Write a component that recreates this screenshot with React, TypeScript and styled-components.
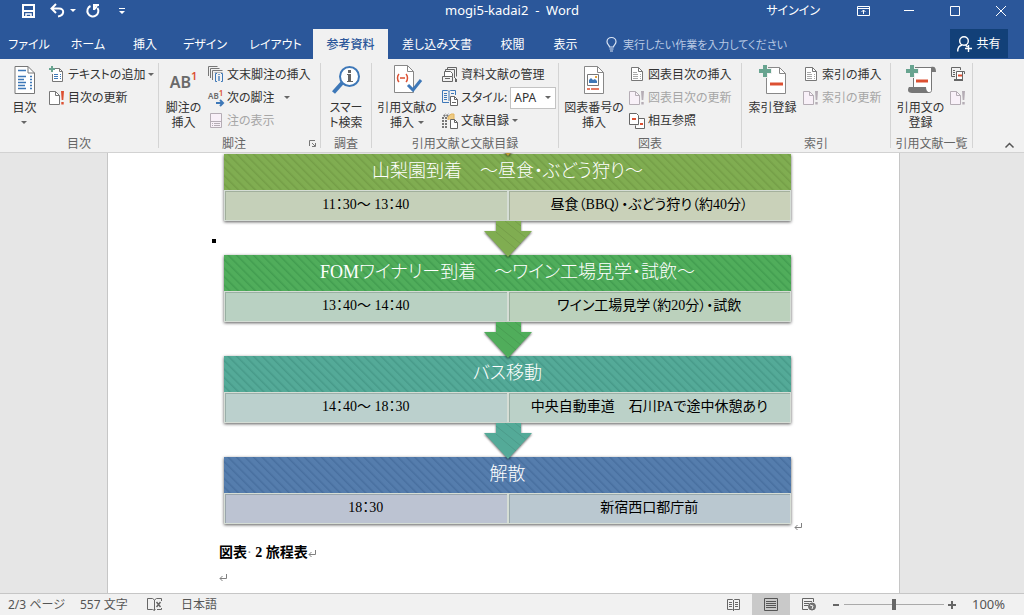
import React from "react";
import styled, { createGlobalStyle } from "styled-components";

const GlobalStyle = createGlobalStyle`
  *, *::before, *::after { box-sizing: border-box; }
  body {
    margin: 0;
    font-family: "Noto Sans", "Noto Sans CJK JP", sans-serif;
    font-size: 12px;
    line-height: 15px;
    font-feature-settings: "palt";
    color: #444;
  }
  button, input, select {
    font: inherit;
    font-feature-settings: inherit;
    color: inherit;
    margin: 0;
  }
  button { border: 0; padding: 0; background: none; white-space: nowrap; }
  svg { display: block; flex: none; overflow: visible; }
`;

const BLUE = "#2b579a";

const Window = styled.div`
  display: flex;
  flex-direction: column;
  height: 100vh;
  background: #e6e6e6;
`;

/* ---------- title bar ---------- */

const TitleBar = styled.header`
  display: grid;
  grid-template-columns: 1fr auto 1fr;
  align-items: center;
  height: 29px;
  padding-bottom: 8px;
  background: ${BLUE};
  color: #fff;
`;

const QuickAccess = styled.div`
  display: flex;
  align-items: center;
  padding-left: 21px;
`;

const QuickButton = styled.button<{ $gap: number }>`
  margin-right: ${(p) => p.$gap}px;
`;

const Title = styled.h1`
  margin: 0;
  font-size: 13px;
  font-weight: 400;
  white-space: pre;
`;

const WindowControls = styled.div`
  display: flex;
  align-items: center;
  justify-content: flex-end;
`;

const SignIn = styled.button`
  margin-right: 20px;
`;

const WindowButton = styled.button`
  display: flex;
  justify-content: center;
  width: 46px;
`;

/* ---------- tab strip ---------- */

const TabStrip = styled.nav`
  display: flex;
  height: 30px;
  background: ${BLUE};
  color: #fff;
`;

const Tab = styled.button<{ $width: number; $active?: boolean }>`
  width: ${(p) => p.$width}px;
  font-weight: ${(p) => (p.$active ? 500 : 400)};
  background: ${(p) => (p.$active ? "#f1f1f1" : "transparent")};
  color: ${(p) => (p.$active ? BLUE : "#fff")};
`;

const TellMe = styled.label`
  display: flex;
  align-items: center;
  flex: 1;
  gap: 6px;
  padding-left: 14px;
`;

const TellMeInput = styled.input`
  flex: 1;
  min-width: 0;
  padding: 0;
  border: 0;
  outline: 0;
  font-size: 11px;
  background: none;
  &::placeholder { color: #b9c9e4; opacity: 1; }
`;

const Share = styled.button`
  display: flex;
  align-items: center;
  justify-content: center;
  gap: 4px;
  width: 58px;
  height: 29px;
  margin-right: 16px;
  background: #124078;
`;

/* ---------- ribbon ---------- */

const Ribbon = styled.div`
  display: flex;
  height: 94px;
  padding-top: 4px;
  background: #f1f1f1;
  border-bottom: 1px solid #d2d2d2;
`;

const Group = styled.section<{ $width: number }>`
  display: flex;
  flex-direction: column;
  flex: none;
  width: ${(p) => p.$width}px;
  padding-right: 1px;
  background: linear-gradient(#d4d4d4, #d4d4d4) right top / 1px 85px no-repeat;
`;

const GroupBody = styled.div`
  display: flex;
  flex: none;
  height: 71px;
`;

const GroupFooter = styled.div`
  display: flex;
  align-items: center;
  flex: 1;
`;

const GroupName = styled.h2`
  flex: 1;
  margin: 0;
  font-size: 12px;
  font-weight: 400;
  text-align: center;
  white-space: nowrap;
  color: #666;
`;

const Launcher = styled.button`
  width: 11px;
`;

const BigButton = styled.button<{ $width: number }>`
  display: flex;
  flex-direction: column;
  align-items: center;
  flex: none;
  gap: 4px;
  width: ${(p) => p.$width}px;
  padding-top: 2px;
`;

const BigLabel = styled.span`
  display: flex;
  flex-direction: column;
  align-items: center;
  color: #333;
`;

const LabelLine = styled.span`
  display: flex;
  align-items: center;
  justify-content: center;
  gap: 4px;
  height: 15px;
`;

const Commands = styled.div`
  display: flex;
  flex-direction: column;
`;

const Command = styled.button<{ $off?: boolean }>`
  display: flex;
  align-items: center;
  gap: 3px;
  height: 23px;
  color: ${(p) => (p.$off ? "#a6a6a6" : "#333")};
`;

const CommandCaret = styled.span<{ $apart?: boolean }>`
  margin-left: ${(p) => (p.$apart ? 6 : 0)}px;
`;

const IconSlot = styled.span`
  display: flex;
  flex: none;
  width: 16px;
`;

const StyleRow = styled.label`
  display: flex;
  align-items: center;
  gap: 3px;
  height: 23px;
  white-space: nowrap;
  color: #333;
`;

const SelectBox = styled.span`
  display: grid;
  grid-template-columns: 1fr 10px;
  align-items: center;
  flex: none;
  width: 46px;
  height: 22px;
  border: 1px solid #c3c3c3;
  background: #fff;
`;

const StyleSelect = styled.select`
  grid-area: 1 / 1 / 2 / 3;
  width: 44px;
  height: 20px;
  padding: 0 12px 0 3px;
  border: 0;
  outline: 0;
  appearance: none;
  background: none;
`;

const SelectArrow = styled.span`
  grid-area: 1 / 2;
  pointer-events: none;
`;

const RibbonEnd = styled.div`
  display: flex;
  flex: 1;
  align-items: flex-end;
  justify-content: flex-end;
  padding: 0 10px 4px 0;
`;

/* ---------- document ---------- */

const Workspace = styled.main`
  flex: 1;
  min-height: 0;
  overflow: hidden;
  display: flex;
  justify-content: center;
  padding-right: 17px;
`;

const Paper = styled.article`
  width: 793px;
  padding: 0 107px 0 111px;
  background: #fff;
  border: solid #c6c6c6;
  border-width: 0 1px;
  font-family: "Liberation Serif", "Noto Sans CJK JP", serif;
  font-weight: 300;
  color: #000;
`;

const Figure = styled.figure`
  position: relative;
  display: flex;
  flex-direction: column;
  align-items: center;
  width: 567px;
  margin: -33px 0 0 5px;
`;

const AnchorMark = styled.span`
  position: absolute;
  left: -12px;
  top: 119px;
  width: 4px;
  height: 4px;
  background: #000;
`;

const EndMark = styled.span`
  position: absolute;
  right: -11px;
  bottom: -6px;
`;

const Step = styled.section`
  width: 100%;
  box-shadow: 0 1px 3px rgba(0, 0, 0, 0.65);
`;

const StepTitle = styled.h3<{ $color: string; $line: string }>`
  height: 36px;
  margin: 0;
  font-size: 18px;
  line-height: 34px;
  font-weight: 300;
  text-align: center;
  white-space: nowrap;
  color: #fff;
  background: repeating-linear-gradient(
    45deg,
    ${(p) => p.$color} 0,
    ${(p) => p.$color} 3px,
    ${(p) => p.$line} 4px,
    ${(p) => p.$color} 6px
  );
`;

const StepCells = styled.div`
  display: grid;
  grid-template-columns: 1fr 1fr;
  height: 31px;
`;

const StepCell = styled.p<{ $color: string }>`
  margin: 0;
  font-size: 14px;
  line-height: 27px;
  font-weight: 400;
  text-align: center;
  white-space: nowrap;
  background: ${(p) => p.$color};
  border: 1px solid #d5ddd5;
  box-shadow: inset 1px 1px 0 rgba(70, 90, 80, 0.28);
`;

const ArrowShape = styled.svg`
  position: relative;
  margin-bottom: -3px;
  filter: drop-shadow(0 1px 1px rgba(0, 0, 0, 0.6));
`;

const Caption = styled.p`
  display: flex;
  align-items: center;
  margin: 17px 0 0;
  font-size: 14px;
  line-height: 24px;
  font-weight: 700;
  white-space: pre;
`;

const SpaceMark = styled.span`
  font-weight: 400;
  color: #808080;
`;

const EmptyLine = styled.p`
  display: flex;
  align-items: center;
  height: 24px;
  margin: 0;
`;

/* ---------- status bar ---------- */

const StatusBar = styled.footer`
  display: flex;
  align-items: center;
  height: 22px;
  padding: 0 19px 0 8px;
  background: #f1f1f1;
  border-top: 1px solid #c6c6c6;
  color: #555;
`;

const StatusItem = styled.button<{ $width: number }>`
  width: ${(p) => p.$width}px;
  text-align: left;
`;

const Spacer = styled.div`
  flex: 1;
`;

const ViewButton = styled.button<{ $active?: boolean }>`
  display: flex;
  align-items: center;
  justify-content: center;
  width: 38px;
  height: 21px;
  background: ${(p) => (p.$active ? "#c9c9c9" : "transparent")};
`;

const ZoomButton = styled.button`
  width: 8px;
  margin: 0 4px;
`;

const ZoomSlider = styled.input`
  width: 100px;
  height: 12px;
  appearance: none;
  background: linear-gradient(#aaa, #aaa) center / 100% 1px no-repeat;
  &::-webkit-slider-thumb {
    appearance: none;
    width: 4px;
    height: 11px;
    background: #666;
  }
`;

const ZoomValue = styled.button`
  width: 33px;
  margin-left: 12px;
  font-size: 13px;
  text-align: right;
`;

/* ---------- icons ---------- */

const Caret = ({ color = "#666" }: { color?: string }) => (
  <svg width="6" height="3" viewBox="0 0 6 3"><path d="M0 0h6L3 3z" fill={color} /></svg>
);

const SaveIcon = () => (
  <svg width="15" height="14" viewBox="0 0 15 14" fill="none" stroke="#fff" strokeWidth="2">
    <path d="M2 1h11v12H2zM2 7h11" /><path d="M5 13v-3h5v3" strokeWidth="1.5" />
  </svg>
);
const UndoIcon = () => (
  <svg width="15" height="14" viewBox="0 0 15 14" fill="none" stroke="#fff" strokeWidth="2">
    <path d="M6 0 1.500 4.500 6 9M2 4.500h7c6 0 5.500 7-1 8" />
  </svg>
);
const RedoIcon = () => (
  <svg width="14" height="14" viewBox="0 0 14 14" fill="none" stroke="#fff" strokeWidth="2">
    <path d="M4.500 2A5.500 5.500 0 1 0 11.500 4" /><path d="M8 6V1h5M8 5.500 11 2" />
  </svg>
);
const CustomizeIcon = () => (
  <svg width="6" height="8" viewBox="0 0 6 8" fill="#fff"><path d="M0 1h6v1H0zM0 4h6L3 7z" /></svg>
);
const RibbonOptionsIcon = () => (
  <svg width="13" height="10" viewBox="0 0 13 10" fill="none" stroke="#fff">
    <path d="M.5.5h12v9H.5zM.5 2.500h12M6.500 8V4M4.500 6l2-2 2 2" />
  </svg>
);
const MinimizeIcon = () => <svg width="10" height="10" stroke="#fff"><path d="M0 4.500h10" /></svg>;
const MaximizeIcon = () => <svg width="10" height="10" stroke="#fff" fill="none"><path d="M.5.5h9v9h-9z" /></svg>;
const CloseIcon = () => <svg width="10" height="10" stroke="#fff"><path d="M0 0l10 10M10 0 0 10" /></svg>;

const BulbIcon = () => (
  <svg width="11" height="15" viewBox="0 0 11 15" fill="none" stroke="#dce6f5" strokeWidth="1.200">
    <path d="M3.500 10C3.500 8 1 7.500 1 4.800a4.500 4.300 0 0 1 9 0C10 7.500 7.500 8 7.500 10zM3.500 12h4M4 14h3" />
  </svg>
);
const ShareIcon = () => (
  <svg width="15" height="16" viewBox="0 0 15 16" fill="none" stroke="#fff" strokeWidth="1.400">
    <circle cx="7" cy="5" r="4.300" /><path d="M.7 15.500c0-4 2-6 4.500-6.500M8.500 9l2 2M8 12.500h7M11.500 9v7" />
  </svg>
);

const TocIcon = () => (
  <svg width="22" height="31" viewBox="0 0 22 31" fill="none">
    <path d="M1 1.500h13l6.500 6.500v20.500H1z" fill="#fff" stroke="#777" />
    <path d="M14 1.500V8h6.500" stroke="#777" />
    <path d="M4 5.500h8M4 11.500h8M4 14.500h6M4 17.500h8M4 20.500h7M4 23.500h8" stroke="#3e78b8" strokeWidth="1.300" />
    <path d="M16 11.500h2M16 14.500h2M16 17.500h2M16 20.500h2M16 23.500h2" stroke="#3e78b8" strokeWidth="1.300" />
  </svg>
);
const AddTextIcon = () => (
  <svg width="16" height="17" viewBox="0 0 16 17" fill="none">
    <path d="M4 2.500h6.500l3 3v10h-10V8" fill="#fff" stroke="#777" /><path d="M10.500 2.500v3h3" stroke="#777" />
    <path d="M3 0v6M0 3h6" stroke="#68a490" strokeWidth="2" />
    <path d="M5 8.500h4M5 10.500h4M5 12.500h4M11 8.500h1M11 10.500h1M11 12.500h1" stroke="#3e78b8" />
  </svg>
);
const UpdateIcon = ({ off }: { off?: boolean }) => (
  <svg width="16" height="16" viewBox="0 0 16 16" fill="none">
    <path d="M.5 1.500h6l4 4v9H.5z" fill={off ? "#f8f0f8" : "#fff"} stroke={off ? "#b5adb5" : "#777"} />
    <path d="M6.500 1.500v4h4" stroke={off ? "#b5adb5" : "#777"} />
    <path d="M12 1h3l-.7 9h-1.600zM12.300 12h2.400v2.500h-2.400z" fill={off ? "#b5adb5" : "#dc5032"} />
  </svg>
);

const FootnoteText = styled.span<{ $small?: boolean }>`
  display: flex;
  align-items: flex-start;
  height: ${(p) => (p.$small ? 16 : 31)}px;
  padding-top: ${(p) => (p.$small ? 0 : 5)}px;
  font-size: ${(p) => (p.$small ? 8 : 16)}px;
  line-height: ${(p) => (p.$small ? 12 : 25)}px;
  font-weight: 600;
  color: #6a6a6a;
`;
const Superscript = styled.sup<{ $small?: boolean }>`
  font-size: ${(p) => (p.$small ? 8 : 11)}px;
  line-height: ${(p) => (p.$small ? 6 : 11)}px;
  color: #dc5032;
`;
const NextNote = styled.span`
  display: grid;
  width: 16px;
`;
const NextArrow = styled.span`
  grid-area: 1 / 1;
  align-self: end;
  justify-self: end;
`;
const NextLetters = styled(FootnoteText)`
  grid-area: 1 / 1;
`;
const NextNoteIcon = () => (
  <NextNote>
    <NextLetters $small>AB<Superscript $small>1</Superscript></NextLetters>
    <NextArrow>
      <svg width="8" height="6" viewBox="0 0 8 6" fill="none" stroke="#3e78b8" strokeWidth="2"><path d="M0 3h6M4 0l3 3-3 3" /></svg>
    </NextArrow>
  </NextNote>
);
const EndnoteIcon = () => (
  <svg width="16" height="17" viewBox="0 0 16 17" fill="none">
    <path d="M.5 10V.5h9M2.500 12V2.500h9M4.500 14V4.500h10M6.500 7h8" stroke="#777" />
    <path d="M6 7h10v10H6z" fill="#f1f1f1" />
    <path d="M9 7.500H7.500v8H9M13 7.500h1.500v8H13" stroke="#3e78b8" />
    <path d="M11 8v1M11 10v5" stroke="#3e78b8" strokeWidth="1.300" />
  </svg>
);
const ShowNotesIcon = () => (
  <svg width="16" height="15" viewBox="0 0 16 15" fill="none" stroke="#b5adb5">
    <path d="M2.500.5h11v14h-11z" fill="#f8f0f8" /><path d="M2.500 8.500h11M4 10.500h1M6 10.500h6M4 12.500h1M6 12.500h6" />
  </svg>
);
const LookupIcon = () => (
  <svg width="28" height="31" viewBox="0 0 28 31" fill="none">
    <path d="M10 18 1.500 27.500" stroke="#3e78b8" strokeWidth="4" />
    <circle cx="17.500" cy="11.500" r="9.500" fill="#fff" stroke="#3e78b8" strokeWidth="2" />
    <path d="M16 5h3v3h-3zM15 9h4v7h2v1h-6v-1h1v-6h-1z" fill="#666" />
  </svg>
);
const CitationIcon = () => (
  <svg width="28" height="31" viewBox="0 0 28 31" fill="none">
    <path d="M1.500.5h13l6 6v21h-19z" fill="#fff" stroke="#888" /><path d="M14.500.5v6h6" stroke="#888" />
    <path d="M6 9C4 11 4 15 6 17M13 9c2 2 2 6 0 8M7 13h5" stroke="#dc5032" strokeWidth="1.500" />
    <path d="M15 20l5 5 8-10" stroke="#3e78b8" strokeWidth="3" />
  </svg>
);
const ManageSourcesIcon = () => (
  <svg width="16" height="16" viewBox="0 0 16 16" fill="none" stroke="#666">
    <path d="M5.500 2V.5h9v9M3.500 4V2.500h9V11" /><path d="M2.500 9V4.500h6l2 2V9" fill="#fff" />
    <path d="M.5 9.500h10v5H.5zM3 11.500h5M13.500 11v4" /><path d="M14 12v3" strokeWidth="2" />
  </svg>
);
const StyleIcon = () => (
  <svg width="16" height="16" viewBox="0 0 16 16" fill="none">
    <path d="M7 12.500H.5V.5h5l1.500 1 1.500-1h5V5M7 2v9" stroke="#3e78b8" />
    <path d="M2 3.500h3M2 5.500h3M2 7.500h3M2 9.500h3M9 3.500h3" stroke="#3e78b8" />
    <path d="M8.500 6.500h4l3 3v6h-7z" fill="#fff" stroke="#666" /><path d="M12.500 6.500v3h3M10 12.500h4" stroke="#666" />
  </svg>
);
const BibliographyIcon = () => (
  <svg width="16" height="16" viewBox="0 0 16 16" fill="none">
    <path d="M1 15V4l3-3M4 15V4l3-3" stroke="#777" strokeWidth="2" strokeDasharray="2 1" />
    <path d="M6 7V4l3-3h3v5" fill="#eecb83" stroke="#e3b45e" />
    <path d="M8.500 6.500h4l3 3v6h-7z" fill="#fff" stroke="#666" /><path d="M12.500 6.500v3h3" stroke="#666" />
  </svg>
);
const FigureCaptionIcon = () => (
  <svg width="22" height="31" viewBox="0 0 22 31" fill="none">
    <path d="M1.500 1.500h13l6 6v21h-19z" fill="#fff" stroke="#888" /><path d="M14.500 1.500v6h6" stroke="#888" />
    <path d="M4.500 9.500h11v11h-11z" stroke="#777" /><path d="M6 18v-3l2-2 2 2 2-1 2 2v2z" fill="#3e78b8" />
    <path d="M12 11h2v2h-2z" fill="#e3a23e" /><path d="M4 24h3M8 24h8" stroke="#dc5032" strokeWidth="1.300" />
  </svg>
);
const ListIcon = () => (
  <svg width="16" height="15" viewBox="0 0 16 15" fill="none" stroke="#777">
    <path d="M2.500.5h7l4 4v9h-11z" fill="#fff" /><path d="M9.500.5v4h4" />
    <path d="M4 5.500h4M4 7.500h5M4 9.500h5M4 11.500h5M11 7.500h1M11 9.500h1M11 11.500h1" stroke="#aaa" />
  </svg>
);
const CrossRefIcon = () => (
  <svg width="16" height="16" viewBox="0 0 16 16" fill="none">
    <path d="M.5.5h7l2 2v9h-9z" fill="#fff" stroke="#666" />
    <path d="M9.500 5.500h6v10h-9v-3" stroke="#666" />
    <path d="M10 6h5v9H7v-2h3z" fill="#fff" /><path d="M3 6h4M11 11h3" stroke="#dc5032" strokeWidth="2" />
  </svg>
);
const MarkIndexIcon = () => (
  <svg width="28" height="31" viewBox="0 0 28 31" fill="none">
    <path d="M7.500 2.500h13l6 6v20h-19z" fill="#fff" stroke="#888" /><path d="M20.500 2.500v6h6" stroke="#888" />
    <path d="M6 0v13M0 6h13" stroke="#f1f1f1" strokeWidth="6" />
    <path d="M6 0v12M0 6h12" stroke="#68a490" strokeWidth="4" /><path d="M11 19h13" stroke="#dc5032" strokeWidth="3" />
  </svg>
);
const MarkCitationIcon = () => (
  <svg width="30" height="31" viewBox="0 0 30 31" fill="none">
    <path d="M7.500 22V2.500h18v23c0 2-2 2-3 2H8z" fill="#fff" stroke="#777" />
    <path d="M25 2c4-1 5 1 5 5h-5zM3 22h17c0 3 1 5 4 6H6c-4 0-5-3-3-6z" fill="#777" />
    <path d="M6 0v13M0 6h13" stroke="#f1f1f1" strokeWidth="6" />
    <path d="M6 0v12M0 6h12" stroke="#68a490" strokeWidth="4" /><path d="M10 16h12" stroke="#dc5032" strokeWidth="3" />
  </svg>
);
const AuthoritiesIcon = () => (
  <svg width="16" height="15" viewBox="0 0 16 15" fill="none" stroke="#666">
    <path d="M5 9.500H1.500v-9h9V3M3 3.500h2M3 5.500h2M3 7.500h2" />
    <path d="M6.500 12V4.500h6v8" fill="#fff" /><path d="M12 4.500h2.500V7" />
    <path d="M4 13h9" strokeWidth="2" /><path d="M8 8.500h4" stroke="#dc5032" strokeWidth="2" />
  </svg>
);
const LauncherIcon = () => (
  <svg width="7" height="7" viewBox="0 0 7 7" fill="none" stroke="#777"><path d="M.5 6V.5H6M3 3l3 3M6.500 3v3.500H3" /></svg>
);
const CollapseIcon = () => (
  <svg width="9" height="5" viewBox="0 0 9 5" fill="none" stroke="#555" strokeWidth="1.500"><path d="M.5 4.500l4-4 4 4" /></svg>
);
const ReturnMark = () => (
  <svg width="8" height="7" viewBox="0 0 8 7" fill="none" stroke="#808080"><path d="M7.500 0v4.500H1M3.500 2 1 4.500 3.500 7" /></svg>
);
const ProofIcon = () => (
  <svg width="15" height="13" viewBox="0 0 15 13" fill="none" stroke="#666">
    <path d="M7.500 12V2l-2-1.500h-5v11h5l2 1 1-1M7.500 2l2-1.500h5V3M14.500 10v1.500H10" /><path d="M9.500 4l4 5M13.500 4l-4 5" strokeWidth="1.500" />
  </svg>
);
const ReadIcon = () => (
  <svg width="13" height="12" viewBox="0 0 13 12" fill="none" stroke="#666">
    <path d="M.5.5h5l1 1 1-1h5v10h-5l-1 1-1-1h-5zM6.500 1v11M2 3.500h3M2 5.500h3M2 7.500h3M8 3.500h3M8 5.500h3M8 7.500h3" />
  </svg>
);
const PrintIcon = () => (
  <svg width="14" height="13" viewBox="0 0 14 13" fill="none" stroke="#555">
    <path d="M.5.5h13v12H.5zM2 3.500h10M2 5.500h10M2 7.500h10M2 9.500h10" />
  </svg>
);
const WebIcon = () => (
  <svg width="14" height="13" viewBox="0 0 14 13" fill="none" stroke="#666">
    <path d="M6 11.500H.5V.5h11V4M2 3.500h8M2 5.500h5M2 7.500h4" /><circle cx="10" cy="8.500" r="3.500" fill="#777" /><path d="M8 7l3 1-1 3" stroke="#f1f1f1" />
  </svg>
);

/* ---------- composed parts ---------- */

const Big = ({ icon, lines, width, caret }: { icon: React.ReactNode; lines: string[]; width: number; caret?: boolean }) => (
  <BigButton $width={width}>
    {icon}
    <BigLabel>
      {lines.map((line, i) => (
        <LabelLine key={i}>
          {line}
          {caret && i === lines.length - 1 && <Caret />}
        </LabelLine>
      ))}
    </BigLabel>
  </BigButton>
);

type CmdProps = {
  icon: React.ReactNode;
  label?: string;
  name?: string;
  off?: boolean;
  caret?: boolean;
  split?: boolean;
};

const Cmd = ({ icon, label, name, off, caret, split }: CmdProps) => (
  <Command $off={off} disabled={off} aria-label={name}>
    <IconSlot>{icon}</IconSlot>
    {label}
    {(caret || split) && <CommandCaret $apart={split}><Caret /></CommandCaret>}
  </Command>
);

const DownArrow = ({ color }: { color: string }) => (
  <ArrowShape width="50" height="37" viewBox="0 0 50 37">
    <path d="M13 0h25v10h11L25 36 1 10h12z" fill={color} />
    <path d="M13 3l25 20M13 11l20 17M22 0l20 16M32 0l6 5" stroke="#000" strokeOpacity=".09" />
  </ArrowShape>
);

const steps = [
  { title: "山梨園到着　～昼食・ぶどう狩り～", time: "11：30～ 13：40", place: "昼食（BBQ）・ぶどう狩り（約40分）", color: "#80ad51", line: "#749e47", left: "#c5d0b9", right: "#c9d1b9" },
  { title: "FOMワイナリー到着　～ワイン工場見学・試飲～", time: "13：40～ 14：40", place: "ワイン工場見学（約20分）・試飲", color: "#50ad5b", line: "#429d50", left: "#b9d1c2", right: "#bbd1bc" },
  { title: "バス移動", time: "14：40～ 18：30", place: "中央自動車道　石川PAで途中休憩あり", color: "#54aa98", line: "#479a89", left: "#bbd0cd", right: "#bbd1c8" },
  { title: "解散", time: "18：30", place: "新宿西口都庁前", color: "#557dad", line: "#486f9f", left: "#bcc3d2", right: "#bac8d0" },
];

const tabs: [string, number][] = [
  ["ファイル", 58], ["ホーム", 60], ["挿入", 54], ["デザイン", 66], ["レイアウト", 75],
  ["参考資料", 75], ["差し込み文書", 98], ["校閲", 53], ["表示", 53],
];

export default function App() {
  return (
    <Window>
      <GlobalStyle />
      <TitleBar>
        <QuickAccess>
          <QuickButton $gap={14} aria-label="上書き保存"><SaveIcon /></QuickButton>
          <QuickButton $gap={5} aria-label="元に戻す"><UndoIcon /></QuickButton>
          <QuickButton $gap={10} aria-label="元に戻す履歴"><Caret color="#fff" /></QuickButton>
          <QuickButton $gap={19} aria-label="繰り返し"><RedoIcon /></QuickButton>
          <QuickButton $gap={0} aria-label="カスタマイズ"><CustomizeIcon /></QuickButton>
        </QuickAccess>
        <Title>{"mogi5-kadai2  -  Word"}</Title>
        <WindowControls>
          <SignIn>サインイン</SignIn>
          <WindowButton aria-label="リボンの表示オプション"><RibbonOptionsIcon /></WindowButton>
          <WindowButton aria-label="最小化"><MinimizeIcon /></WindowButton>
          <WindowButton aria-label="最大化"><MaximizeIcon /></WindowButton>
          <WindowButton aria-label="閉じる"><CloseIcon /></WindowButton>
        </WindowControls>
      </TitleBar>

      <TabStrip>
        {tabs.map(([label, width]) => (
          <Tab key={label} $width={width} $active={label === "参考資料"}>{label}</Tab>
        ))}
        <TellMe>
          <BulbIcon />
          <TellMeInput aria-label="操作アシスト" placeholder="実行したい作業を入力してください" />
        </TellMe>
        <Share><ShareIcon />共有</Share>
      </TabStrip>

      <Ribbon>
        <Group $width={159}>
          <GroupBody>
            <Big width={49} icon={<TocIcon />} lines={["目次", ""]} caret />
            <Commands>
              <Cmd icon={<AddTextIcon />} label="テキストの追加" caret />
              <Cmd icon={<UpdateIcon />} label="目次の更新" />
            </Commands>
          </GroupBody>
          <GroupFooter><GroupName>目次</GroupName></GroupFooter>
        </Group>

        <Group $width={162}>
          <GroupBody>
            <Big width={49} icon={<FootnoteText>AB<Superscript>1</Superscript></FootnoteText>} lines={["脚注の", "挿入"]} />
            <Commands>
              <Cmd icon={<EndnoteIcon />} label="文末脚注の挿入" />
              <Cmd icon={<NextNoteIcon />} label="次の脚注" split />
              <Cmd icon={<ShowNotesIcon />} label="注の表示" off />
            </Commands>
          </GroupBody>
          <GroupFooter>
            <GroupName>脚注</GroupName>
            <Launcher aria-label="脚注と文末脚注"><LauncherIcon /></Launcher>
          </GroupFooter>
        </Group>

        <Group $width={51}>
          <GroupBody><Big width={50} icon={<LookupIcon />} lines={["スマー", "ト検索"]} /></GroupBody>
          <GroupFooter><GroupName>調査</GroupName></GroupFooter>
        </Group>

        <Group $width={187}>
          <GroupBody>
            <Big width={70} icon={<CitationIcon />} lines={["引用文献の", "挿入"]} caret />
            <Commands>
              <Cmd icon={<ManageSourcesIcon />} label="資料文献の管理" />
              <StyleRow>
                <IconSlot><StyleIcon /></IconSlot>
                スタイル:
                <SelectBox>
                  <StyleSelect defaultValue="APA"><option>APA</option><option>MLA</option></StyleSelect>
                  <SelectArrow><Caret /></SelectArrow>
                </SelectBox>
              </StyleRow>
              <Cmd icon={<BibliographyIcon />} label="文献目録" caret />
            </Commands>
          </GroupBody>
          <GroupFooter><GroupName>引用文献と文献目録</GroupName></GroupFooter>
        </Group>

        <Group $width={183}>
          <GroupBody>
            <Big width={70} icon={<FigureCaptionIcon />} lines={["図表番号の", "挿入"]} />
            <Commands>
              <Cmd icon={<ListIcon />} label="図表目次の挿入" />
              <Cmd icon={<UpdateIcon off />} label="図表目次の更新" off />
              <Cmd icon={<CrossRefIcon />} label="相互参照" />
            </Commands>
          </GroupBody>
          <GroupFooter><GroupName>図表</GroupName></GroupFooter>
        </Group>

        <Group $width={149}>
          <GroupBody>
            <Big width={61} icon={<MarkIndexIcon />} lines={["索引登録"]} />
            <Commands>
              <Cmd icon={<ListIcon />} label="索引の挿入" />
              <Cmd icon={<UpdateIcon off />} label="索引の更新" off />
            </Commands>
          </GroupBody>
          <GroupFooter><GroupName>索引</GroupName></GroupFooter>
        </Group>

        <Group $width={82}>
          <GroupBody>
            <Big width={59} icon={<MarkCitationIcon />} lines={["引用文の", "登録"]} />
            <Commands>
              <Cmd icon={<AuthoritiesIcon />} name="引用文献一覧の挿入" />
              <Cmd icon={<UpdateIcon off />} name="引用文献一覧の更新" off />
            </Commands>
          </GroupBody>
          <GroupFooter><GroupName>引用文献一覧</GroupName></GroupFooter>
        </Group>

        <RibbonEnd><button aria-label="リボンを折りたたむ"><CollapseIcon /></button></RibbonEnd>
      </Ribbon>

      <Workspace>
        <Paper>
          <Figure>
            <DownArrow color="#c09a3e" />
            {steps.map((step, i) => (
              <React.Fragment key={step.title}>
                <Step>
                  <StepTitle $color={step.color} $line={step.line}>{step.title}</StepTitle>
                  <StepCells>
                    <StepCell $color={step.left}>{step.time}</StepCell>
                    <StepCell $color={step.right}>{step.place}</StepCell>
                  </StepCells>
                </Step>
                {i < steps.length - 1 && <DownArrow color={step.color} />}
              </React.Fragment>
            ))}
            <AnchorMark />
            <EndMark><ReturnMark /></EndMark>
          </Figure>
          <Caption>図表<SpaceMark>·</SpaceMark> 2 旅程表<ReturnMark /></Caption>
          <EmptyLine><ReturnMark /></EmptyLine>
        </Paper>
      </Workspace>

      <StatusBar>
        <StatusItem $width={72}>2/3 ページ</StatusItem>
        <StatusItem $width={67}>557 文字</StatusItem>
        <StatusItem $width={34} aria-label="文章校正"><ProofIcon /></StatusItem>
        <StatusItem $width={60}>日本語</StatusItem>
        <Spacer />
        <ViewButton aria-label="閲覧モード"><ReadIcon /></ViewButton>
        <ViewButton aria-label="印刷レイアウト" $active><PrintIcon /></ViewButton>
        <ViewButton aria-label="Web レイアウト"><WebIcon /></ViewButton>
        <ZoomButton aria-label="縮小"><svg width="8" height="8" stroke="#666" strokeWidth="2"><path d="M1 4h6" /></svg></ZoomButton>
        <ZoomSlider type="range" min={0} max={100} defaultValue={50} aria-label="ズーム" />
        <ZoomButton aria-label="拡大"><svg width="8" height="8" stroke="#666" strokeWidth="2"><path d="M0 4h8M4 0v8" /></svg></ZoomButton>
        <ZoomValue>100%</ZoomValue>
      </StatusBar>
    </Window>
  );
}
